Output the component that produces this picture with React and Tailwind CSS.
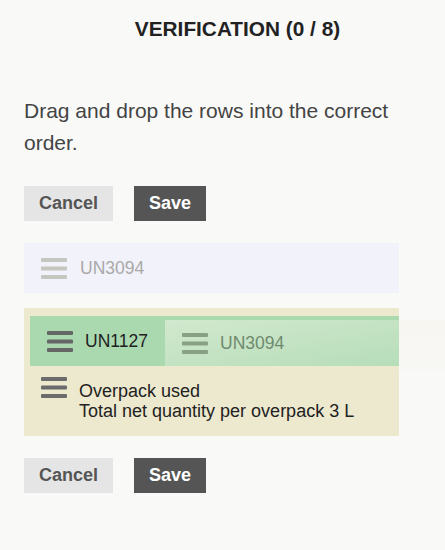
function BarsIcon({ className }) {
    return (
        <svg width="26" height="21" viewBox="0 0 26 21" className={className} fill="currentColor">
            <rect x="0" y="0" width="26" height="4" rx="1" />
            <rect x="0" y="8.5" width="26" height="4" rx="1" />
            <rect x="0" y="17" width="26" height="4" rx="1" />
        </svg>
    );
}

function Buttons() {
    return (
        <div className="flex gap-[21px]">
            <button className="h-[35px] px-[15px] bg-[#e5e5e5] text-[#555] font-bold text-[18px]">
                Cancel
            </button>
            <button className="h-[35px] px-[15px] bg-[#555] text-white font-bold text-[18px]">
                Save
            </button>
        </div>
    );
}

export default function App() {
    return (
        <div className="min-h-[550px] w-[445px] bg-[#f9f9f8] font-['Liberation_Sans',Arial,sans-serif] overflow-hidden">

            {/* HEADER */}
            <h1 className="pt-[17px] pl-[30px] text-center text-[20.8px] leading-[24px] font-bold text-[#222]">
                VERIFICATION (0 / 8)
            </h1>

            <div className="px-[24px] w-[399px] box-content">
                <p className="mt-[54px] text-[21px] leading-[32px] text-[#444]">
                    Drag and drop the rows into the correct order.
                </p>

                <div className="mt-[27px]">
                    <Buttons />
                </div>

                {/* PLACEHOLDER ROW */}
                <div className="mt-[22px] w-[375px] h-[50px] bg-[#f2f2fa] flex items-center pl-[17px] gap-[13px]">
                    <BarsIcon className="text-[#c6c6c0]" />
                    <span className="text-[17.5px] text-[#a9a9a9]">UN3094</span>
                </div>

                {/* DROP ZONE */}
                <div className="relative mt-[15px] w-[375px] bg-[#ede9cf] pt-[8px] pl-[6px]">
                    <div className="h-[50px] bg-[#aad9b0] flex items-center pl-[17px] gap-[12px]">
                        <BarsIcon className="text-[#666]" />
                        <span className="text-[17.5px] text-[#222]">UN1127</span>
                    </div>

                    {/* dragged item */}
                    <div className="absolute left-[141px] top-[12px] w-[234px] h-[46px] flex items-center pl-[17px] gap-[12px] bg-[linear-gradient(170deg,rgba(236,243,226,0.6),rgba(230,238,220,0.2))]">
                        <BarsIcon className="text-[#87a086]" />
                        <span className="text-[17.5px] text-[#6f8a6e]">UN3094</span>
                    </div>
                    <div className="absolute left-[375px] top-[12px] w-[46px] h-[50px] bg-[linear-gradient(180deg,rgba(240,236,220,0.25),rgba(240,236,220,0.1))]" />

                    <div className="flex items-start pl-[11px] pt-[11px] pb-[15px] gap-[12px]">
                        <BarsIcon className="text-[#6b6b6b] shrink-0" />
                        <div className="pt-[4px] text-[18px] leading-[20px] text-[#222]">
                            <div>Overpack used</div>
                            <div>Total net quantity per overpack 3 L</div>
                        </div>
                    </div>
                </div>

                <div className="mt-[22px]">
                    <Buttons />
                </div>
            </div>
        </div>
    );
}
